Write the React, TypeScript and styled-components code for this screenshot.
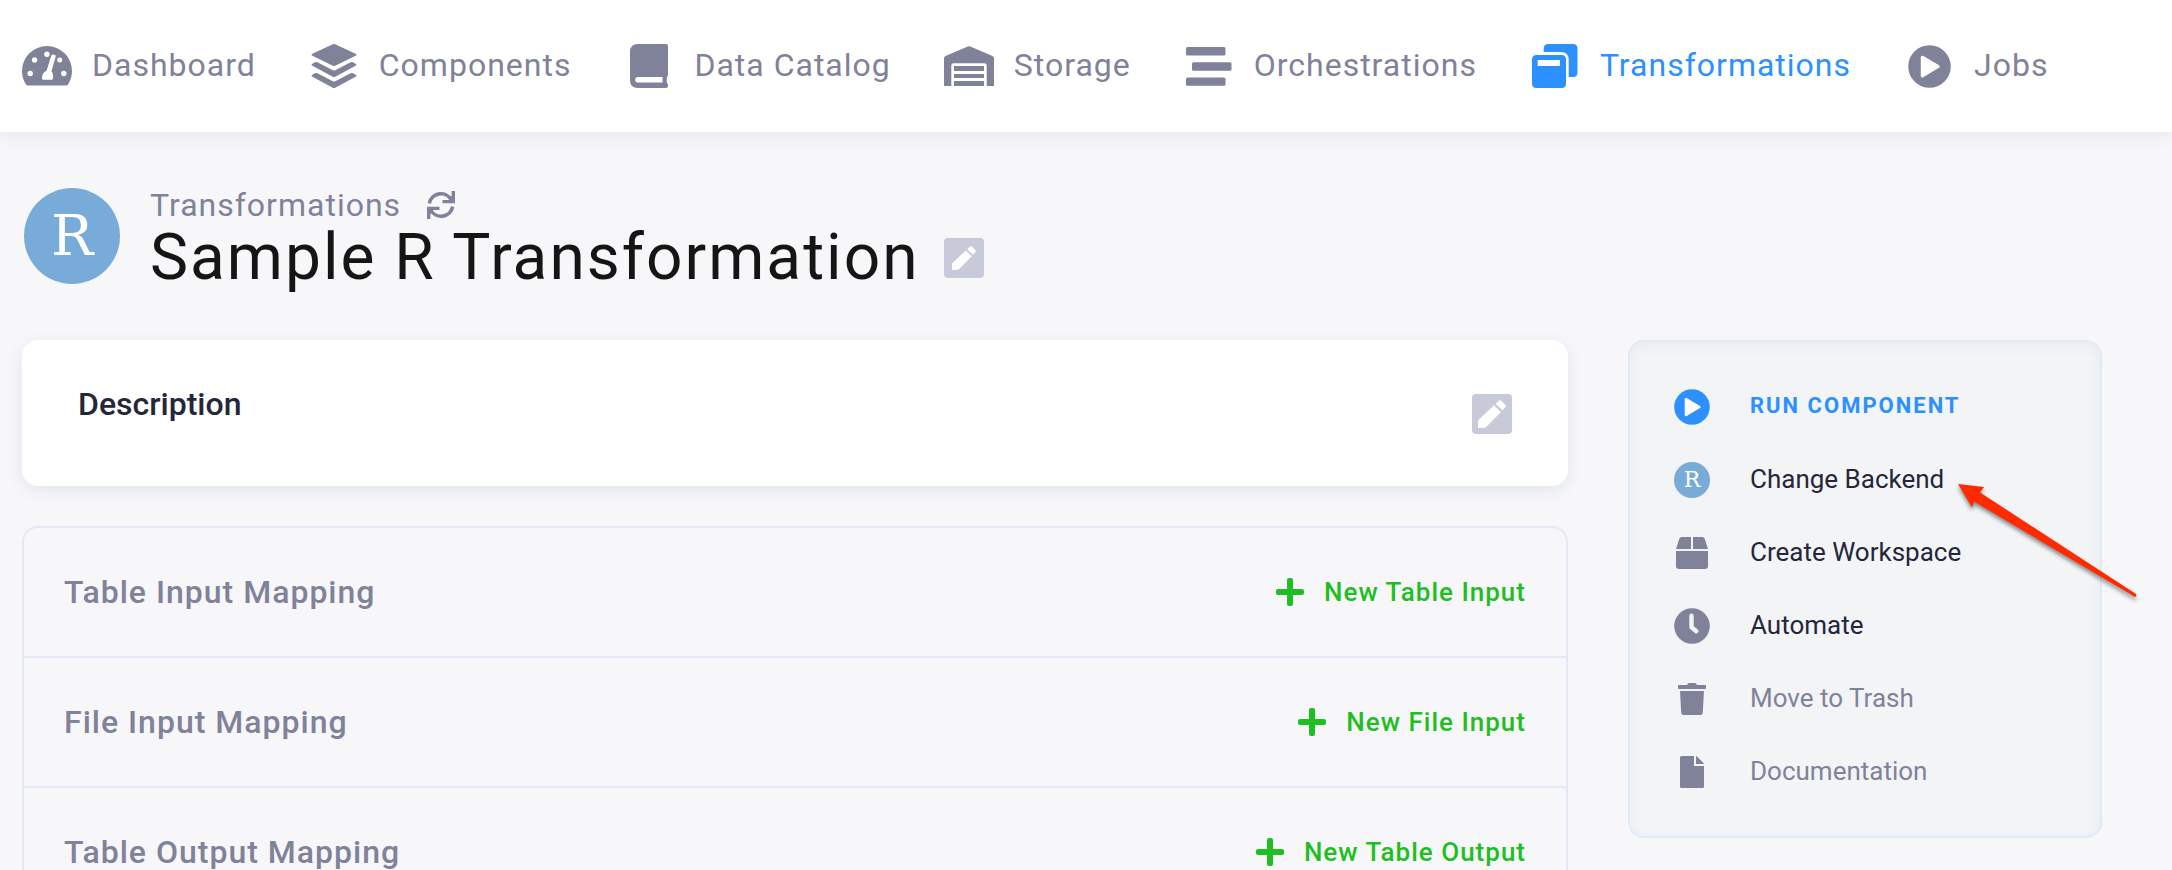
import React from "react";
import styled, { createGlobalStyle } from "styled-components";

const color = {
  grey: "#80829a",
  blue: "#2c90ff",
  dark: "#25263a",
  green: "#1fbe22",
  border: "#e3e9f4",
  badge: "#c9cad9",
  r: "#78abd8",
};

const GlobalStyle = createGlobalStyle`
  *, *::before, *::after { box-sizing: border-box; }
  body {
    margin: 0;
    background: #f7f7fa;
    font-family: Roboto, "Liberation Sans", sans-serif;
    -webkit-font-smoothing: antialiased;
  }
  h1, h2, ul { margin: 0; padding: 0; }
  ul { list-style: none; }
  a { color: inherit; text-decoration: none; }
  button {
    padding: 0;
    border: 0;
    background: none;
    color: inherit;
    font: inherit;
    letter-spacing: inherit;
    cursor: pointer;
  }
  svg { display: block; flex: none; }
`;

const Page = styled.div`
  height: 100vh;
  overflow: hidden auto;
  scrollbar-width: none;
`;

const NavBar = styled.nav`
  height: 132px;
  padding: 0 22px;
  background: #fff;
  box-shadow: 0 2px 20px rgba(0, 0, 0, 0.08);
`;

const NavList = styled.ul`
  display: flex;
  align-items: center;
  gap: 53px;
  height: 100%;
`;

const NavLink = styled.a<{ $active?: boolean }>`
  display: flex;
  align-items: center;
  gap: 20px;
  color: ${(p) => (p.$active ? color.blue : color.grey)};
  font-size: 32px;
  line-height: 40px;
  letter-spacing: 1px;
  white-space: nowrap;
`;

const NavIcon = styled.span`
  display: flex;
  justify-content: center;
  width: 50px;
`;

const NavLabel = styled.span`
  padding-bottom: 2px;
`;

const PageHead = styled.header`
  display: flex;
  align-items: flex-start;
  gap: 30px;
  padding: 56px 24px 46px;
`;

const RBadge = styled.span<{ $size: number; $font: number }>`
  display: flex;
  flex: none;
  align-items: center;
  justify-content: center;
  width: ${(p) => p.$size}px;
  height: ${(p) => p.$size}px;
  border-radius: 50%;
  background: ${color.r};
  color: #fff;
  font-family: "DejaVu Serif", serif;
  font-size: ${(p) => p.$font}px;
  line-height: 1;
`;

const Crumb = styled.div`
  display: flex;
  align-items: center;
  gap: 26px;
  color: ${color.grey};
  font-size: 32px;
  line-height: 34px;
  letter-spacing: 1px;
`;

const TitleRow = styled.div`
  display: flex;
  align-items: center;
  gap: 24px;
`;

const Title = styled.h1`
  color: #151515;
  font-size: 64px;
  font-weight: 400;
  line-height: 72px;
  letter-spacing: 2px;
`;

const EditButton = styled.button`
  display: flex;
  flex: none;
  align-items: center;
  justify-content: center;
  width: 40px;
  height: 40px;
  border-radius: 4px;
  background: ${color.badge};
  color: #fff;
`;

const Columns = styled.div`
  display: grid;
  grid-template-columns: minmax(0, 1fr) 474px;
  align-items: start;
  gap: 60px;
  padding: 0 70px 40px 22px;
`;

const Main = styled.main`
  display: flex;
  flex-direction: column;
  gap: 40px;
`;

const DescriptionCard = styled.section`
  display: flex;
  align-items: flex-end;
  justify-content: space-between;
  padding: 44px 56px 52px;
  border-radius: 16px;
  background: #fff;
  box-shadow: 0 4px 16px rgba(40, 80, 110, 0.1);
`;

const DescriptionTitle = styled.h2`
  height: 50px;
  color: ${color.dark};
  font-size: 32px;
  font-weight: 500;
  line-height: 40px;
`;

const MappingList = styled.ul`
  border: 2px solid ${color.border};
  border-radius: 16px;
`;

const MappingRow = styled.li`
  display: flex;
  align-items: center;
  justify-content: space-between;
  box-sizing: content-box;
  height: 128px;
  padding: 0 40px;

  & + & {
    border-top: 2px solid ${color.border};
  }
`;

const MappingName = styled.h2`
  color: ${color.grey};
  font-size: 32px;
  font-weight: 500;
  line-height: 40px;
  letter-spacing: 1px;
`;

const AddButton = styled.button`
  display: flex;
  align-items: center;
  gap: 20px;
  color: ${color.green};
  font-size: 26px;
  font-weight: 500;
  line-height: 32px;
  letter-spacing: 1px;
`;

const Sidebar = styled.aside`
  padding: 28px 44px;
  border: 2px solid ${color.border};
  border-radius: 16px;
  background: #f2f4f6;
  box-shadow: inset 0 4px 14px rgba(40, 110, 140, 0.05);
`;

const ActionItem = styled.li`
  position: relative;
  display: flex;
  align-items: center;
  height: 73px;
`;

const ActionButton = styled.button<{ $tone?: "primary" | "muted" }>`
  display: flex;
  align-items: center;
  gap: 40px;
  color: ${(p) => (p.$tone === "primary" ? color.blue : p.$tone === "muted" ? color.grey : color.dark)};
  font-size: ${(p) => (p.$tone === "primary" ? 22 : 26)}px;
  font-weight: ${(p) => (p.$tone === "primary" ? 700 : 400)};
  line-height: 32px;
  letter-spacing: ${(p) => (p.$tone === "primary" ? 2 : 0)}px;
  text-transform: ${(p) => (p.$tone === "primary" ? "uppercase" : "none")};
  white-space: nowrap;
`;

const ActionIcon = styled.span<{ $blue?: boolean }>`
  display: flex;
  justify-content: center;
  width: 36px;
  color: ${(p) => (p.$blue ? color.blue : color.grey)};
`;

const ActionLabel = styled.span`
  padding-bottom: 2px;
`;

const Pointer = styled.svg`
  position: absolute;
  top: 40px;
  left: 284px;
  overflow: visible;
  filter: drop-shadow(0 3px 2px rgba(0, 0, 0, 0.45));
  pointer-events: none;
`;

const DashboardIcon = () => (
  <svg width="50" height="40" viewBox="0 0 50 40">
    <path
      fill="currentColor"
      d="M6 39.5c-1 0-1.700-.4-2.200-1.300A25 25 0 0 1 0 25a25 25 0 0 1 50 0c0 4.800-1.400 9.300-3.800 13.200-.5.900-1.200 1.300-2.200 1.300z"
    />
    <g fill="#fff">
      <circle cx="12.600" cy="14" r="2.700" />
      <circle cx="24.900" cy="8.300" r="2.700" />
      <circle cx="37.700" cy="14" r="2.500" />
      <circle cx="8.200" cy="27.500" r="2.700" />
      <circle cx="41.800" cy="27.500" r="2.700" />
      <path d="M29.300 9.600c.6-2.100 5-1.300 4.400 1L29.400 25.300c1.200 1.200 1.600 2.800 1.600 5V32c0 1.200-.6 1.800-1.800 1.800h-7.400c-1.200 0-1.800-.6-1.800-1.800 0-3 1.200-5.800 4.600-7.200z" />
    </g>
  </svg>
);

const LayersIcon = () => (
  <svg width="46" height="44" viewBox="0 0 46 44" fill="currentColor">
    <path d="M21.800.3q1.200-.5 2.400 0L44.600 9.700q1.800 1 0 2L24.200 21.700q-1.200.5-2.400 0L1.400 11.700q-1.800-1 0-2z" />
    <path d="M1.400 19.700 4 18.300q1.200-.4 2.400 0L21.800 26.300q1.200.5 2.400 0L39.600 18.300q1.200-.4 2.400 0l2.600 1.400q1.800 1 0 2L24.200 32.700q-1.200.5-2.400 0L1.400 21.700q-1.800-1 0-2z" />
    <path d="M1.400 30.700 4 29.300q1.200-.4 2.400 0L21.800 37.300q1.200.5 2.400 0L39.600 29.300q1.200-.4 2.400 0l2.600 1.400q1.800 1 0 2L24.200 43.700q-1.200.5-2.400 0L1.400 32.700q-1.800-1 0-2z" />
  </svg>
);

const BookIcon = () => (
  <svg width="38" height="44" viewBox="0 0 38 44">
    <path
      fill="currentColor"
      d="M8 0h28q2 0 2 2v29q0 1.200-1 1.800-.6 3.200 0 6.400 1 .6 1 1.800v1q0 2-2 2H8q-8 0-8-8V8q0-8 8-8z"
    />
    <path fill="#fff" d="M8 33h24.500v5.600H8q-2.800 0-2.800-2.800T8 33z" />
  </svg>
);

const WarehouseIcon = () => (
  <svg width="50" height="40" viewBox="0 0 50 40" fill="currentColor">
    <path d="M0 40V12.400q0-1.600 1.500-2.300L23.800.4q1.200-.5 2.400 0l22.300 9.700q1.500.7 1.500 2.300V40h-7.300V19.600q0-2.300-2.300-2.300H9.600q-2.300 0-2.300 2.300V40z" />
    <path d="M10 20h30v5H10zM10 28h30v4H10zM10 35h30v5H10z" />
  </svg>
);

const StreamIcon = () => (
  <svg width="46" height="39" viewBox="0 0 46 39" fill="currentColor">
    <rect width="39.500" height="8.400" rx="1.500" />
    <rect x="6" y="15.300" width="39.500" height="8.400" rx="1.500" />
    <rect y="30.400" width="39.500" height="8.400" rx="1.500" />
  </svg>
);

const TransformIcon = () => (
  <svg width="46" height="44" viewBox="0 0 46 44" fill="currentColor">
    <path d="M11.700 8V4.500Q11.700 0 16.200 0H41q4.500 0 4.500 4.500v24Q45.500 33 41 33h-4.300V16q0-8-8-8z" />
    <path
      fillRule="evenodd"
      d="M4.500 11h25q4.500 0 4.500 4.500v24q0 4.500-4.500 4.500h-25Q0 44 0 39.500v-24Q0 11 4.500 11zM5.700 16v6H28v-6z"
    />
  </svg>
);

const PlayIcon = ({ size }: { size: number }) => (
  <svg width={size} height={size} viewBox="0 0 36 36">
    <circle cx="18" cy="18" r="17.800" fill="currentColor" />
    <path d="M12 10.200 25.300 18 12 25.800z" fill="#fff" stroke="#fff" strokeWidth="2.600" strokeLinejoin="round" />
  </svg>
);

const RefreshIcon = () => (
  <svg width="28" height="28" viewBox="0 0 28 28" fill="none" stroke="currentColor" strokeWidth="3.600">
    <path d="M2.300 12.300A11.800 11.800 0 0 1 24.300 9" />
    <path d="M25.700 12.300A11.800 11.800 0 0 1 25.700 15.700" stroke="none" />
    <path d="M28 0v12.300H15.500V9H22l2.600-4V0z" fill="currentColor" stroke="none" />
    <path d="M25.700 15.700A11.800 11.800 0 0 1 3.700 19" />
    <path d="M0 28V15.700h12.500V19H6l-2.600 4v5z" fill="currentColor" stroke="none" />
  </svg>
);

const PencilIcon = ({ size }: { size: number }) => (
  <svg width={size} height={size} viewBox="0 0 24 24" fill="currentColor">
    <path d="M0 24V18.500q0-1 .8-1.800L13.700 4.600l6 5.600L7.400 22.700q-.8.900-1.800 1z" />
    <path d="M15.200 3.200 17.600.8q1.200-1.200 2.600 0l3 3q1.300 1.300 0 2.600l-2.300 2.400z" />
  </svg>
);

const PlusIcon = () => (
  <svg width="28" height="28" viewBox="0 0 28 28" fill="currentColor">
    <rect y="11" width="28" height="6" rx="2" />
    <rect x="11" width="6" height="28" rx="2" />
  </svg>
);

const BoxIcon = () => (
  <svg width="32" height="32" viewBox="0 0 32 32" fill="currentColor">
    <path d="M15 0v12H0L3.200 1.900Q3.800 0 5.800 0zM17 0h9.200q2 0 2.600 1.900L32 12H17zM0 14h32v15q0 3-3 3H3q-3 0-3-3z" />
  </svg>
);

const ClockIcon = () => (
  <svg width="36" height="36" viewBox="0 0 36 36">
    <circle cx="18" cy="18" r="17.800" fill="currentColor" />
    <path d="M17.500 7.800v11.400l4.800 4" fill="none" stroke="#f2f4f6" strokeWidth="4.400" strokeLinecap="round" strokeLinejoin="round" />
  </svg>
);

const TrashIcon = () => (
  <svg width="28" height="32" viewBox="0 0 28 32" fill="currentColor">
    <path d="M1 2h8l.8-1.300Q10.200 0 11 0h6q.8 0 1.200.7L19 2h8q1 0 1 1v2q0 1-1 1H1Q0 6 0 5V3q0-1 1-1zM2 8h24l-1.200 21.200Q24.600 32 22 32H6q-2.600 0-2.800-2.800z" />
  </svg>
);

const FileIcon = () => (
  <svg width="24" height="32" viewBox="0 0 24 32" fill="currentColor">
    <path d="M1.500 0H14v10h10v20.500q0 1.500-1.500 1.500h-21Q0 32 0 30.500v-29Q0 0 1.500 0zM16 0h.5L24 7.500V8h-8z" />
  </svg>
);

const navItems = [
  { label: "Dashboard", icon: <DashboardIcon /> },
  { label: "Components", icon: <LayersIcon /> },
  { label: "Data Catalog", icon: <BookIcon /> },
  { label: "Storage", icon: <WarehouseIcon /> },
  { label: "Orchestrations", icon: <StreamIcon /> },
  { label: "Transformations", icon: <TransformIcon />, active: true },
  { label: "Jobs", icon: <PlayIcon size={43} /> },
];

const mappings = [
  { name: "Table Input Mapping", action: "New Table Input" },
  { name: "File Input Mapping", action: "New File Input" },
  { name: "Table Output Mapping", action: "New Table Output" },
];

type Action = {
  label: string;
  icon: React.ReactNode;
  tone?: "primary" | "muted";
  pointed?: boolean;
};

const actions: Action[] = [
  { label: "Run Component", icon: <PlayIcon size={36} />, tone: "primary" },
  { label: "Change Backend", icon: <RBadge $size={36} $font={22} aria-hidden="true">R</RBadge>, pointed: true },
  { label: "Create Workspace", icon: <BoxIcon /> },
  { label: "Automate", icon: <ClockIcon /> },
  { label: "Move to Trash", icon: <TrashIcon />, tone: "muted" },
  { label: "Documentation", icon: <FileIcon />, tone: "muted" },
];

export default function App() {
  return (
    <>
      <GlobalStyle />
      <Page>
        <NavBar>
          <NavList>
            {navItems.map((item) => (
              <li key={item.label}>
                <NavLink href="#" $active={item.active} aria-current={item.active ? "page" : undefined}>
                  <NavIcon>{item.icon}</NavIcon>
                  <NavLabel>{item.label}</NavLabel>
                </NavLink>
              </li>
            ))}
          </NavList>
        </NavBar>

        <PageHead>
          <RBadge $size={96} $font={56} aria-hidden="true">R</RBadge>
          <div>
            <Crumb>
              <a href="#">Transformations</a>
              <button aria-label="Refresh"><RefreshIcon /></button>
            </Crumb>
            <TitleRow>
              <Title>Sample R Transformation</Title>
              <EditButton aria-label="Edit name"><PencilIcon size={24} /></EditButton>
            </TitleRow>
          </div>
        </PageHead>

        <Columns>
          <Main>
            <DescriptionCard>
              <DescriptionTitle>Description</DescriptionTitle>
              <EditButton aria-label="Edit description"><PencilIcon size={28} /></EditButton>
            </DescriptionCard>
            <MappingList>
              {mappings.map((m) => (
                <MappingRow key={m.name}>
                  <MappingName>{m.name}</MappingName>
                  <AddButton><PlusIcon />{m.action}</AddButton>
                </MappingRow>
              ))}
            </MappingList>
          </Main>

          <Sidebar>
            <ul>
              {actions.map((a) => (
                <ActionItem key={a.label}>
                  <ActionButton $tone={a.tone}>
                    <ActionIcon $blue={a.tone === "primary"}>{a.icon}</ActionIcon>
                    <ActionLabel>{a.label}</ActionLabel>
                  </ActionButton>
                  {a.pointed && (
                    <Pointer width="180" height="116" viewBox="0 0 180 116" aria-hidden="true">
                      <path
                        fill="#ff2a00"
                        d="M0 1 26 4 22 9.500 178 111Q179 113 177 114L16 18.500 14 24.500z"
                      />
                    </Pointer>
                  )}
                </ActionItem>
              ))}
            </ul>
          </Sidebar>
        </Columns>
      </Page>
    </>
  );
}
